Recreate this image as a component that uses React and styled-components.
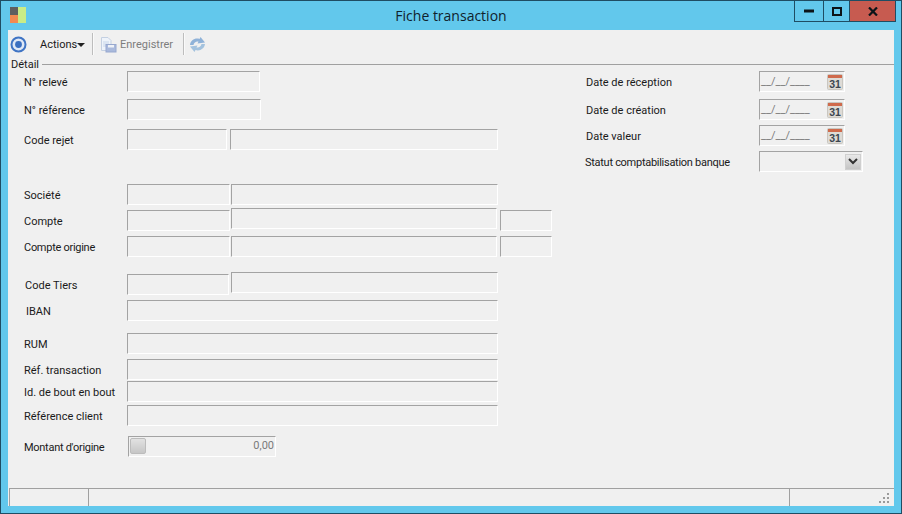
import React from 'react'
import styled, { createGlobalStyle } from 'styled-components'

const GlobalStyle = createGlobalStyle`
  html, body {
    margin: 0;
    padding: 0;
    background: #62c8ec;
  }
  * {
    box-sizing: border-box;
  }
`

const Window = styled.div`
  width: 902px;
  height: 514px;
  display: flex;
  flex-direction: column;
  background: #62c8ec;
  border: 1px solid #1f4d63;
  font-family: Roboto, "Liberation Sans", Arial, sans-serif;
  font-size: 11px;
  color: #1a1a1a;
  overflow: hidden;
`

const TitleBar = styled.div`
  height: 29px;
  flex: none;
  display: grid;
  grid-template-columns: 1fr auto 1fr;
  align-items: start;
`

const AppIcon = styled.svg`
  display: block;
  margin: 6px 0 0 9px;
`

const Title = styled.div`
  font-family: "Open Sans", sans-serif;
  font-size: 14px;
  line-height: 30px;
  color: #10222c;
`

const Controls = styled.div`
  justify-self: end;
  display: flex;
  margin-right: 5px;
  height: 21px;
  border: 1px solid #1f4d63;
  border-top: 0;
`

const ControlButton = styled.div`
  width: ${p => p.$w}px;
  display: flex;
  align-items: center;
  justify-content: center;
  background: ${p => p.$close ? '#c75b50' : 'transparent'};
  border-left: ${p => p.$first ? '0' : '1px solid #1f4d63'};
`

const Client = styled.div`
  flex: 1;
  margin: 0 7px 7px;
  display: flex;
  flex-direction: column;
  background: #f0f0f0;
  min-height: 0;
`

const Toolbar = styled.div`
  height: 27px;
  flex: none;
  display: flex;
  align-items: center;
  padding: 1px 0 0 2px;
`

const ToolIcon = styled.svg`
  display: block;
  flex: none;
  margin-left: ${p => p.$left || 0}px;
`

const ToolText = styled.span`
  width: ${p => p.$w}px;
  flex: none;
  margin-left: ${p => p.$left || 0}px;
  color: ${p => p.$disabled ? '#7d7d7d' : '#1a1a1a'};
  white-space: nowrap;
`

const Caret = styled.span`
  width: 0;
  height: 0;
  margin: 2px 0 0 3px;
  border-left: 4px solid transparent;
  border-right: 4px solid transparent;
  border-top: 4px solid #222;
`

const Separator = styled.span`
  width: 2px;
  height: 22px;
  flex: none;
  margin-left: ${p => p.$left}px;
  background: #bdbdbd;
  border-right: 1px solid #fafafa;
`

const Legend = styled.div`
  height: 14px;
  flex: none;
  display: flex;
  align-items: center;
  padding-left: 3px;
`

const LegendLine = styled.span`
  flex: 1;
  height: 1px;
  margin: 1px 0 0 3px;
  background: #a0a0a0;
`

const Form = styled.div`
  flex: 1;
  display: flex;
  min-height: 0;
`

const Column = styled.div`
  width: ${p => p.$w}px;
  flex: none;
  display: flex;
  flex-direction: column;
`

const Row = styled.div`
  display: flex;
  align-items: flex-start;
  margin-top: ${p => p.$top || 0}px;
`

const Label = styled.div`
  width: ${p => p.$w}px;
  flex: none;
  height: 21px;
  line-height: 23px;
  padding-left: ${p => p.$indent || 0}px;
  margin-top: ${p => p.$drop || 0}px;
  letter-spacing: ${p => p.$tight ? '-0.28px' : 'normal'};
  white-space: nowrap;
`

const Field = styled.div`
  width: ${p => p.$w}px;
  height: 21px;
  flex: none;
  margin-left: ${p => p.$gap || 0}px;
  margin-top: ${p => p.$drop || 0}px;
  background: #f0f0f0;
  border: 1px solid #a3a3a3;
  border-right-color: #ffffff;
  border-bottom-color: #ffffff;
`

const DateField = styled(Field)`
  display: flex;
  align-items: center;
  justify-content: space-between;
  padding: 0 1px;
  color: #7a7a7a;
`

const SelectField = styled(Field)`
  display: flex;
  align-items: center;
  justify-content: flex-end;
  padding-right: 1px;
`

const ChevronButton = styled.div`
  width: 16px;
  height: 16px;
  display: flex;
  align-items: center;
  justify-content: center;
  background: linear-gradient(#e8e8e8, #c4c4c4);
  border: 1px solid #cfcfcf;
`

const AmountField = styled(Field)`
  display: flex;
  align-items: center;
  justify-content: space-between;
  padding: 0 1px 2px 1px;
  color: #7a7a7a;
`

const SpinButton = styled.div`
  width: 16px;
  height: 16px;
  background: linear-gradient(#e2e2e2, #c6c6c6);
  border: 1px solid #bcbcbc;
  border-radius: 2px;
`

const StatusBar = styled.div`
  height: 18px;
  flex: none;
  display: flex;
  margin-left: 1px;
  border-top: 1px solid #a0a0a0;
  border-left: 1px solid #a0a0a0;
`

const StatusCell = styled.div`
  width: ${p => p.$w ? `${p.$w}px` : 'auto'};
  flex: ${p => p.$w ? 'none' : 1};
  position: relative;
  border-left: ${p => p.$first ? '0' : '1px solid #a0a0a0'};
`

const Grip = styled.svg`
  position: absolute;
  right: 4px;
  bottom: 2px;
`

const CalendarIcon = () => (
  <svg width="16" height="16" viewBox="0 0 16 16">
    <rect x="0.5" y="0.5" width="15" height="15" rx="1" fill="#dedbd6" stroke="#c9c6c0" />
    <rect x="1" y="1" width="14" height="3" fill="#cf6a4c" />
    <text x="8" y="13.5" textAnchor="middle" fontFamily="Liberation Sans, sans-serif" fontSize="10.5" fontWeight="700" fill="#3c4650">31</text>
  </svg>
)

const leftRows = [
  { label: 'N° relevé', fields: [{ w: 133 }] },
  { top: 7, label: 'N° référence', fields: [{ w: 134 }] },
  { top: 9, label: 'Code rejet', fields: [{ w: 100 }, { w: 268, gap: 3 }] },
  { top: 34, label: 'Société', fields: [{ w: 103 }, { w: 267, gap: 1 }] },
  { top: 3, label: 'Compte', drop: 2, fields: [{ w: 103, drop: 2 }, { w: 266, gap: 1 }, { w: 52, gap: 3, drop: 2 }] },
  { top: 5, label: 'Compte origine', tight: true, fields: [{ w: 103 }, { w: 266, gap: 1 }, { w: 52, gap: 3 }] },
  { top: 15, label: 'Code Tiers', indent: 17, drop: 2, fields: [{ w: 102, drop: 2 }, { w: 267, gap: 2 }] },
  { top: 5, label: 'IBAN', indent: 18, fields: [{ w: 371 }] },
  { top: 12, label: 'RUM', fields: [{ w: 371 }] },
  { top: 5, label: 'Réf. transaction', fields: [{ w: 371 }] },
  { top: 1, label: 'Id. de bout en bout', fields: [{ w: 371 }] },
  { top: 3, label: 'Référence client', fields: [{ w: 371 }] },
]

const rightRows = [
  { label: 'Date de réception', top: 0 },
  { label: 'Date de création', top: 7 },
  { label: 'Date valeur', top: 5 },
]

export default function App() {
  return (
    <>
      <GlobalStyle />
      <Window>
        <TitleBar>
          <AppIcon width="16" height="16" viewBox="0 0 16 16">
            <rect x="0" y="0" width="8" height="8" fill="#5f5f5f" />
            <rect x="0" y="8" width="8" height="8" fill="#f28a50" />
            <rect x="8" y="0" width="8" height="16" fill="#c9ec86" />
          </AppIcon>
          <Title>Fiche transaction</Title>
          <Controls>
            <ControlButton $w={28} $first>
              <svg width="10" height="4" viewBox="0 0 10 4"><rect x="0" y="0.5" width="10" height="3" fill="#0c1418" /></svg>
            </ControlButton>
            <ControlButton $w={26}>
              <svg width="10" height="9" viewBox="0 0 10 9"><rect x="1" y="1" width="8" height="7" fill="none" stroke="#0c1418" strokeWidth="2" /></svg>
            </ControlButton>
            <ControlButton $w={46} $close>
              <svg width="10" height="9" viewBox="0 0 10 9"><path d="M1 0.5 L9 8.5 M9 0.5 L1 8.5" stroke="#0c1418" strokeWidth="2.2" fill="none" /></svg>
            </ControlButton>
          </Controls>
        </TitleBar>
        <Client>
          <Toolbar>
            <ToolIcon width="17" height="17" viewBox="0 0 17 17">
              <circle cx="8.5" cy="8.5" r="7" fill="#dfe8f6" stroke="#3f74c4" strokeWidth="2" />
              <circle cx="8.5" cy="8.5" r="3.4" fill="#3a6fc0" />
            </ToolIcon>
            <ToolText $left={13} $w={34}>Actions</ToolText>
            <Caret />
            <Separator $left={7} />
            <ToolIcon $left={6} width="17" height="17" viewBox="0 0 17 17">
              <path d="M1.5 1.5 H8 L11 4.5 V14.5 H1.5 Z" fill="#eef3fa" stroke="#c4d0e2" />
              <path d="M3 6 H9 M3 8 H9 M3 10 H6" stroke="#c8d6ea" />
              <rect x="6" y="8.5" width="10" height="7.5" fill="#a9b9dc" stroke="#97a8cf" />
              <rect x="8" y="9" width="6" height="2.5" fill="#eef1f7" />
            </ToolIcon>
            <ToolText $left={3} $w={53} $disabled>Enregistrer</ToolText>
            <Separator $left={10} />
            <ToolIcon $left={4} width="17" height="17" viewBox="0 0 17 17">
              <path d="M1 9 C1.5 4.5 6 1.5 10.5 3 L11.5 1 L16 6.5 L8.5 7.5 L9.5 5.5 C7 5 5 6.5 4.5 9 Z" fill="#8fb2d8" />
              <path d="M16 8 C15.5 12.5 11 15.5 6.5 14 L5.5 16 L1 10.5 L8.5 9.5 L7.5 11.5 C10 12 12 10.5 12.5 8 Z" fill="#a3c2de" />
            </ToolIcon>
          </Toolbar>
          <Legend>
            <span>Détail</span>
            <LegendLine />
          </Legend>
          <Form>
            <Column $w={577}>
              {leftRows.map(row => (
                <Row key={row.label} $top={row.top}>
                  <Label $w={119} $indent={row.indent || 16} $drop={row.drop} $tight={row.tight}>{row.label}</Label>
                  {row.fields.map((f, i) => (
                    <Field key={i} $w={f.w} $gap={f.gap} $drop={f.drop} />
                  ))}
                </Row>
              ))}
              <Row $top={10}>
                <Label $w={120} $indent={16} $tight>Montant d'origine</Label>
                <AmountField $w={148}>
                  <SpinButton />
                  <span>0,00</span>
                </AmountField>
              </Row>
            </Column>
            <Column $w={300}>
              {rightRows.map(row => (
                <Row key={row.label} $top={row.top}>
                  <Label $w={174} $indent={1}>{row.label}</Label>
                  <DateField $w={86}>
                    <span>__/__/____</span>
                    <CalendarIcon />
                  </DateField>
                </Row>
              ))}
              <Row $top={5}>
                <Label $w={174} $tight>Statut comptabilisation banque</Label>
                <SelectField $w={104}>
                  <ChevronButton>
                    <svg width="10" height="7" viewBox="0 0 10 7"><path d="M1 1 L5 5 L9 1" fill="none" stroke="#333" strokeWidth="2" /></svg>
                  </ChevronButton>
                </SelectField>
              </Row>
            </Column>
          </Form>
          <StatusBar>
            <StatusCell $w={78} $first />
            <StatusCell />
            <StatusCell $w={105}>
              <Grip width="11" height="11" viewBox="0 0 11 11" fill="#9a9a9a">
                <rect x="8" y="0" width="2" height="2" />
                <rect x="4" y="4" width="2" height="2" />
                <rect x="8" y="4" width="2" height="2" />
                <rect x="0" y="8" width="2" height="2" />
                <rect x="4" y="8" width="2" height="2" />
                <rect x="8" y="8" width="2" height="2" />
              </Grip>
            </StatusCell>
          </StatusBar>
        </Client>
      </Window>
    </>
  )
}
